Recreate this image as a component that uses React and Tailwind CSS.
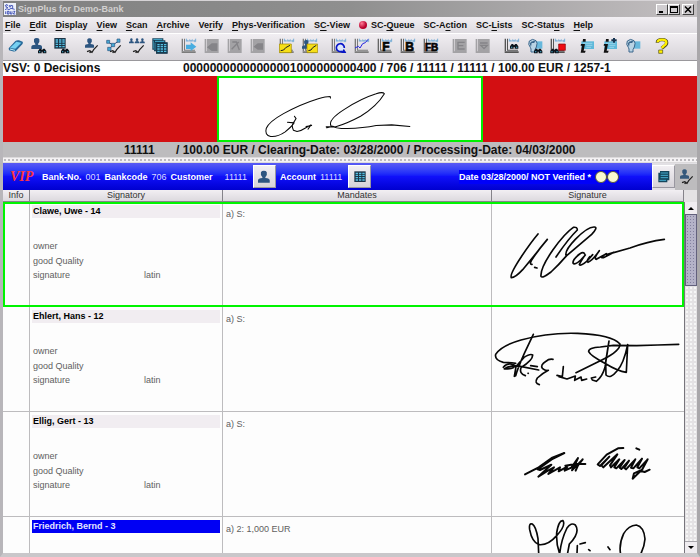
import React from "react";

/* ---------- icon parts, all on a 48 x 48 grid ---------- */

const Binoculars = ({ x = 0, y = 0 }) => (
  <g transform={`translate(${x} ${y})`}>
    <path d="M1 8L6 1H10L13 5L17 1H21L26 8V15H15V10H12V15H1Z" fill="#0c141c" />
    <path d="M4 9H8V12H4ZM19 9H23V12H19Z" fill="#48b4d8" />
  </g>
);
const Person = ({ x = 0, y = 0, s = 1, fill = "#2d5580" }) => (
  <g transform={`translate(${x} ${y}) scale(${s})`} fill={fill}>
    <path d="M8 4Q10 0 16 0Q22 0 24 4V12L20 18V20Q32 20 32 27V33H0V27Q0 20 12 20V18L8 12Z" />
  </g>
);
const Bars = ({ fill = "#7c7c7c" }) => (
  <g>
    <path d="M2 2H6V40H2ZM9 2H12V36H9Z" fill={fill} />
    <path d="M2 40H44V45H2ZM9 35H42V38H9Z" fill={fill} />
    <path d="M16 11V2M16 7H20V11M24 11V6H28V11M32 11V6H36V11M44 2V11H40V7H44" stroke="#6aa6d4" strokeWidth="2.5" fill="none" />
  </g>
);
const GridBlock = ({ x = 0, y = 0, bg = "#1d3648" }) => (
  <g transform={`translate(${x} ${y})`}>
    <path d="M0 0H34V32H0Z" fill={bg} />
    <path d="M4 6H11M14 6H21M24 6H31M4 12H11M14 12H21M24 12H31M4 19H11M14 19H21M24 19H31M4 26H11M14 26H21M24 26H31" stroke="#55bfe2" strokeWidth="4" />
  </g>
);
const Pen = () => <path d="M12 41L20 38L27 43L32 35L44 22M20 45L24 38" fill="none" stroke="#202020" strokeWidth="3.5" />;
const Disabled = ({ children }) => (
  <g>
    <path d="M2 3H7V40H2ZM9 3H44V40H9ZM2 40H44V45H2Z" fill="#a3a2a5" />
    <g fill="none" stroke="#858488" strokeWidth="4">{children}</g>
  </g>
);
const Head = () => (
  <g>
    <path d="M24 10H46V32H24Z" fill="#68b8dc" />
    <path d="M10 28Q2 20 7 9Q16 0 27 8Q33 14 28 27L24 35V42H12V33Z" fill="#b9d3e4" stroke="#3c678c" strokeWidth="3" />
    <path d="M8 17Q12 6 26 10L21 15L14 15L12 26Z" fill="#3c678c" />
  </g>
);
const Info = ({ extra }) => (
  <g>
    <path d="M7 10H45V33H7Z" fill="#5fb9da" />
    <path d="M12 16H40M22 22H40M22 28H36" stroke="#b4e2f0" strokeWidth="2" />
    <path d="M12 3H20V11H11ZM6 18H18L14 38H20L18 44H5L9 23H5Z" fill="#111" />
    {extra && <path d="M28 4H33V0H39V4H44V10H39V14H33V10H28Z" fill="#173450" />}
  </g>
);
const ChartLetters = ({ text, size }) => (
  <g>
    <Bars fill="#666" />
    <text x={text.length > 1 ? 6 : 16} y="40" fontFamily="Liberation Sans, Arial, sans-serif" fontWeight="900" fontSize={size} fill="#050505" stroke="#050505" strokeWidth="2">
      {text}
    </text>
  </g>
);

const toolGroups = [
  [
    ["Clear", <g key="i"><path d="M2 31L22 9Q26 6 33 7L44 11Q46 15 43 19L26 37Q22 42 14 40L3 37Z" fill="#286a9a" /><path d="M6 30L25 11L40 14L22 32Z" fill="#75d0f2" /><path d="M6 33L21 37" stroke="#b9effd" strokeWidth="3" /></g>],
    ["Find customer", <g key="i"><Person x={1} y={0} /><Binoculars x={20} y={31} /></g>],
    ["Find account", <g key="i"><GridBlock x={1} y={0} /><Binoculars x={20} y={31} /></g>],
  ],
  [
    ["Signatory", <g key="i"><Person x={6} y={1} s={0.85} /><Pen /></g>],
    ["Relations", <g key="i"><path d="M6 12L21 21L39 8M21 21L10 33" stroke="#2d5580" strokeWidth="3" fill="none" /><path d="M2 7H11V16H2ZM16 16H26V26H16ZM33 3H42V13H33ZM5 28H15V38H5Z" fill="#45a9d5" stroke="#2d5580" strokeWidth="2" /><Pen /></g>],
    ["Group", <g key="i"><Person x={0} y={1} s={0.45} /><Person x={17} y={1} s={0.45} /><Person x={33} y={1} s={0.45} /><Pen /></g>],
    ["Account sheets", <g key="i"><path d="M1 1H34V7H40V13H47V47H12V40H6V35H1Z" fill="#183b50" /><path d="M4 4H31M9 10H37" stroke="#48b4d8" strokeWidth="3" /><path d="M4 8V32M9 14V37" stroke="#48b4d8" strokeWidth="2" /><GridBlock x={12} y={14} bg="#183b50" /></g>],
  ],
  [
    ["Next item", <g key="i"><Bars /><path d="M15 20H29V13L46 26L29 39V33H15Z" fill="#48ade0" /></g>],
    ["Reject item", <Disabled key="i"><path d="M38 18H24L12 28L24 37H38Z" fill="#858488" /></Disabled>],
    ["Reset item", <Disabled key="i"><path d="M14 34L35 12M16 12H28L37 36" /></Disabled>],
    ["Return item", <Disabled key="i"><path d="M37 18H24L14 26L24 33H37Z" fill="#858488" /></Disabled>],
  ],
  [
    ["Verify check", <g key="i"><Bars /><path d="M1 18H37V44H1Z" fill="#f6df18" stroke="#9c8400" strokeWidth="2" /><path d="M5 38L14 36L20 29L33 22" stroke="#222" strokeWidth="3" fill="none" /></g>],
    ["Verify customer", <g key="i"><Bars /><Person x={0} y={6} s={0.8} /><path d="M15 18H47V44H15Z" fill="#f6df18" stroke="#9c8400" strokeWidth="2" /><path d="M19 38L27 36L32 29L43 22" stroke="#222" strokeWidth="3" fill="none" /></g>],
  ],
  [
    ["Refresh", <g key="i"><Bars /><circle cx="28" cy="29" r="12" fill="#dce8fa" /><path d="M40 30A12 12 0 1 0 33 40" fill="none" stroke="#0715c8" strokeWidth="5" /><path d="M46 45H30L38 33Z" fill="#0715c8" /></g>],
    ["Trace", <g key="i"><Bars /><path d="M3 30L13 25L18 30L26 17L34 14L42 4" fill="none" stroke="#2424e0" strokeWidth="3" /></g>],
    ["Front", <ChartLetters key="i" text="F" size={36} />],
    ["Back", <ChartLetters key="i" text="B" size={36} />],
    ["Front and back", <ChartLetters key="i" text="FB" size={30} />],
  ],
  [
    ["Lock", <Disabled key="i"><path d="M38 13H18V33H38M19 23H34" /></Disabled>],
    ["Unlock", <Disabled key="i"><path d="M15 15H38M17 22L27 32L37 22Z" /></Disabled>],
  ],
  [
    ["Find item", <g key="i"><Bars fill="#555" /><Binoculars x={17} y={17} /></g>],
    ["Find person", <g key="i"><Head /><Binoculars x={20} y={31} /></g>],
    ["Stop search", <g key="i"><Bars fill="#555" /><Binoculars x={0} y={31} /><path d="M26 18H46V37H26Z" fill="#ee0c12" stroke="#850008" strokeWidth="2" /></g>],
  ],
  [
    ["Item info", <Info key="i" />],
    ["Add info", <Info key="i" extra />],
    ["Person info", <Head key="i" />],
  ],
  [
    ["Help", <g key="i"><path d="M10 14Q10 5 24 5Q38 5 38 14Q38 20 29 26L23 31" fill="none" stroke="#4d4a20" strokeWidth="10" /><path d="M14 36H26V46H14Z" fill="#fff000" stroke="#4d4a20" strokeWidth="2" /><path d="M11 13Q11 5 24 5Q37 5 37 14Q37 19 28 25L23 30" fill="none" stroke="#fff000" strokeWidth="7" /></g>],
  ],
];

const menus = [
  ["", "F", "ile"], ["", "E", "dit"], ["", "D", "isplay"], ["", "V", "iew"], ["", "S", "can"],
  ["", "A", "rchive"], ["Ve", "r", "ify"], ["", "P", "hys-Verification"], ["S", "C", "-View"],
  ["SC-", "Q", "ueue"], ["SC-A", "c", "tion"], ["SC-", "L", "ists"], ["SC-Stat", "u", "s"], ["", "H", "elp"],
];

/* ---------- handwriting ---------- */

const Ink = ({ viewBox, className, width = 5, label, children }) => (
  <svg viewBox={viewBox} className={className} role="img" aria-label={label} fill="none" stroke="#080808" strokeWidth={width} strokeLinecap="round" strokeLinejoin="round">
    {children}
  </svg>
);

const CheckSignature = () => (
  <Ink viewBox="51 6 792 186" className="h-[62px] w-[262px]" width={3.2} label="Signature on check">
    <path d="M388 66L387 61Q374 61 351 68Q299 84 246 113Q203 137 194 157Q188 178 207 182Q228 184 251 168Q270 153 278 141L258 139M279 121L284 128L276 141Q269 148 276 163L287 167Q299 165 311 157L329 147L320 160M314 152L331 149" />
    <path d="M375 153L404 153Q440 142 479 121Q528 91 551 53Q546 46 526 53Q481 67 430 100Q381 131 389 149Q400 158 439 158Q487 157 526 149L573 147L628 152M377 156L395 151L405 155" />
  </Ink>
);

const SignatureClawe = () => (
  <Ink viewBox="426 144 576 312" className="h-[104px] w-[192px]" label="Signature of Uwe Clawe">
    <path d="M564 240Q542 266 514 308Q478 362 484 371Q496 371 518 347Q549 310 592 256Q562 291 544 320Q538 332 546 331M554 340L561 342" />
    <path d="M618 309Q655 254 682 228Q682 218 670 220Q645 237 609 287Q570 344 573 367Q577 374 603 354Q625 334 650 305L725 241Q745 220 733 219Q713 218 676 256Q644 289 648 304" />
    <path d="M704 300Q701 292 689 300Q668 316 669 327Q674 335 692 318L706 303Q699 311 688 331Q691 338 710 322L728 302M719 308Q708 321 714 325Q728 319 748 290Q730 314 739 316L769 299Q747 313 760 311L792 295L770 302L840 282Q893 262 943 256" />
  </Ink>
);

const SignatureEhlert = () => (
  <Ink viewBox="36 21 576 312" className="h-[104px] w-[192px]" label="Signature of Hans Ehlert">
    <path d="M160 103L133 160Q113 205 107 227L103 229L108 200L132 172Q151 160 158 165Q159 180 123 203Q117 221 136 227M70 202Q82 187 101 194Q112 206 73 207Q91 194 121 199L176 210M152 197L172 200M144 220H145" />
    <path d="M107 190Q90 187 70 187Q43 180 47 163Q63 137 123 120Q204 97 293 100Q396 104 420 132Q421 152 370 178L288 218" />
    <path d="M219 178Q206 176 198 184Q180 195 187 205Q196 213 205 211Q189 219 172 234Q162 250 178 254M250 200L247 230L231 226M237 230L261 237L286 228L284 241L303 231L305 241L320 237M347 231L334 234L337 240L349 244Q367 231 375 202L387 123L377 185L378 225Q391 238 411 213Q431 192 443 134L439 217Q413 213 377 191Q332 168 326 155Q325 143 361 141L400 136L470 137L533 135L596 133" />
  </Ink>
);

const SignatureEllig = () => (
  <Ink viewBox="36 -54 576 312" className="h-[104px] w-[192px]" width={6} label="Signature of Gert Ellig">
    <path d="M135 133L176 112L215 84L253 69L215 88L173 118L180 120L214 104L186 130L175 140L200 124L222 112L205 132L240 112L236 124L262 110L254 122L274 113L294 84L282 110L276 121L308 88L294 106L287 122M256 107L286 102L316 102" />
    <path d="M430 54L414 55L380 74L353 103L360 108L388 80L364 106L370 112L412 73L390 106L393 112L418 88L403 112L409 115L434 90L419 113L424 117L447 92L433 114L438 118L466 88L453 113L460 115L486 86L472 112L478 115L503 88L487 118L458 146L462 130L480 122L494 126L509 119M469 55L478 59" />
  </Ink>
);

const SignatureFriedrich = () => (
  <Ink viewBox="36 261 576 312" className="h-[104px] w-[192px]" label="Signature of Bernd Friedrich">
    <path d="M176 368L174 326Q168 289 157 282Q146 278 149 299Q156 337 177 344Q204 347 230 317Q258 287 249 272Q236 270 230 309Q228 342 239 371Q244 328 261 294Q273 276 286 285Q302 307 268 342L262 374M292 347L291 371M300 342L316 338M326 359L330 362M384 351L390 359M422 373Q416 343 431 311Q446 286 469 285Q492 290 495 327Q493 352 481 374" />
  </Ink>
);

const signatories = [
  { name: "Clawe, Uwe - 14", mandate: "a) S:", Sign: SignatureClawe, current: true },
  { name: "Ehlert, Hans - 12", mandate: "a) S:", Sign: SignatureEhlert },
  { name: "Ellig, Gert - 13", mandate: "a) S:", Sign: SignatureEllig },
  { name: "Friedrich, Bernd - 3", mandate: "a) 2: 1,000 EUR", Sign: SignatureFriedrich, selected: true },
];

/* ---------- window parts ---------- */

const WindowButton = ({ label, children }) => (
  <button aria-label={label} className="flex h-[11px] w-3 items-center justify-center border border-t-white border-r-[#404040] border-b-[#404040] border-l-white bg-[#d0cdd0]">
    <svg viewBox="0 0 10 9" className="h-[9px] w-[10px]" fill="none" stroke="#000" shapeRendering="crispEdges">{children}</svg>
  </button>
);

const TitleBar = () => (
  <header className="flex h-4 shrink-0 items-center bg-linear-to-r from-[#808080] via-[#8f8f8f] to-[#c4c0c2] pr-[3px] pl-px">
    <svg viewBox="0 0 36 36" className="h-3 w-3" aria-hidden="true">
      <path d="M0 0H36V36H0Z" fill="#eef1fa" />
      <path d="M3 9Q6 2 11 6L5 12L12 14M16 6V13M20 13V7L26 8V17M3 20Q9 14 15 20L21 16L32 19M5 25V33M10 25H15V33H10ZM19 25V33H24V25M28 25H33L28 33H34" fill="none" stroke="#2b3fae" strokeWidth="2.5" />
    </svg>
    <h1 className="ml-0.5 grow text-[9px] leading-3 font-bold text-[#d2d0d0]">SignPlus for Demo-Bank</h1>
    <div className="flex">
      <WindowButton label="Minimize"><path d="M2 7.5H6M2 6.5H6" /></WindowButton>
      <WindowButton label="Maximize"><path d="M1.5 1.5H8.5V7.5H1.5ZM1 2.5H9" /></WindowButton>
      <div className="ml-0.5 flex"><WindowButton label="Close"><path d="M2 1.5L8 7.5M8 1.5L2 7.5" strokeWidth="1.5" shapeRendering="auto" /></WindowButton></div>
    </div>
  </header>
);

const MenuBar = () => (
  <nav className="flex h-4 shrink-0 items-center gap-[9px] bg-linear-to-b from-[#f2eff3] to-[#dedbe0] pl-0.5 text-[9px] leading-3 font-bold text-[#111]">
    {menus.map(([before, key, after]) => (
      <button key={before + key + after} className="flex items-center whitespace-nowrap">
        {before + key + after === "SC-Queue" && <span className="mr-1 h-2 w-2 rounded-full bg-radial-[at_35%_30%] from-[#ff7c98] to-[#b8002c] to-60%" />}
        <span>{before}<span className="underline underline-offset-2">{key}</span>{after}</span>
      </button>
    ))}
  </nav>
);

const ToolBar = () => (
  <div role="toolbar" aria-label="Tools" className="flex h-[27px] shrink-0 items-center gap-[10px] border-t border-t-white bg-linear-to-b from-[#f1eef2] to-[#d6d3d8] pb-0.5 pl-[3px]">
    {toolGroups.map((group, i) => (
      <div key={i} className="flex gap-1">
        {group.map(([label, icon]) => (
          <button key={label} aria-label={label} className="flex w-[19px] justify-center">
            <svg viewBox="0 0 48 48" className="h-4 w-4">{icon}</svg>
          </button>
        ))}
      </div>
    ))}
  </div>
);

const BarButton = ({ label, flat, children }) => (
  <button aria-label={label} className={flat
    ? "flex h-[26px] w-[22px] items-center justify-center bg-[#bdbcbe]"
    : "flex h-[23px] w-[23px] items-center justify-center border border-t-white border-r-[#9997a0] border-b-[#9997a0] border-l-white bg-linear-to-b from-[#f2eff3] to-[#d6d3d8]"}>
    <svg viewBox="0 0 48 48" className="h-4 w-4 shrink-0">{children}</svg>
  </button>
);

const AccountBar = () => (
  <section className="flex h-[27px] shrink-0 items-stretch bg-[#e2e0e4]">
    <div className="flex grow items-center bg-linear-to-b from-[#5a5af4] via-[#1010fa] via-50% to-[#0000d0] pl-[7px] text-[9px] leading-3 text-[#dcdcff]">
      <span className="w-8 font-[Liberation_Serif,serif] text-sm font-bold text-[#ff3440] italic">VIP</span>
      <dl className="flex items-center gap-1">
        <dt className="font-bold text-white">Bank-No.</dt><dd>001</dd>
        <dt className="font-bold text-white">Bankcode</dt><dd>706</dd>
        <dt className="font-bold text-white">Customer</dt><dd className="mr-0.5 ml-2">11111</dd>
        <BarButton label="Customer details"><Person x={6} y={5} s={1.1} /></BarButton>
        <dt className="font-bold text-white">Account</dt><dd className="mr-0.5">11111</dd>
        <BarButton label="Account details"><GridBlock x={7} y={7} /></BarButton>
      </dl>
      <div className="mr-[33px] ml-auto flex items-center bg-[#0000fa] py-px">
        <span className="font-bold text-white">Date 03/28/2000/ NOT Verified *</span>
        <span className="ml-1 h-3 w-3 rounded-full border border-[#55553c] bg-[#fafad0]" />
        <span className="h-3 w-3 rounded-full border border-[#55553c] bg-[#fafad0]" />
      </div>
    </div>
    <div className="flex items-center">
      <BarButton label="List view"><path d="M12 6H40V34H34V40H7V11H12Z" fill="#14465c" /><path d="M14 12H36M14 19H36M14 26H36M10 34H30" stroke="#46acd0" strokeWidth="3" /></BarButton>
      <BarButton label="Signature view" flat><Person x={6} y={1} s={0.85} fill="#34587c" /><Pen /></BarButton>
    </div>
  </section>
);

const SignatoryRow = ({ name, mandate, Sign, current, selected }) => (
  <tr className={current ? "outline-2 -outline-offset-2 outline-[#00f400]" : ""}>
    <td className="h-[105px] border-r border-b border-[#bdbcbe] p-0" />
    <td className="border-r border-b border-[#bdbcbe] p-0 px-0.5 pt-[3px] align-top text-[#606060]">
      <div className={selected
        ? "h-[13px] bg-[#0000f4] pl-px leading-3 font-bold text-[#e4e4ff]"
        : "h-[13px] bg-[#f1edf1] pl-px leading-3 font-bold text-black"}>{name}</div>
      {!selected && (
        <div className="mt-[21px] pl-px leading-[15px]">
          <div>owner</div>
          <div>good Quality</div>
          <div className="grid grid-cols-[111px_1fr] leading-[13px]"><span>signature</span><span>latin</span></div>
        </div>
      )}
    </td>
    <td className="border-r border-b border-[#bdbcbe] p-0 pt-1.5 pl-[3px] align-top leading-3 text-[#606060]">{mandate}</td>
    <td className="border-b border-[#bdbcbe] p-0 align-top"><Sign /></td>
  </tr>
);

const columns = ["Info", "Signatory", "Mandates", "Signature"];

const ScrollBar = () => (
  <div className="flex w-[13px] shrink-0 flex-col bg-[#e4e2e4]">
    <div className="h-3" />
    <div className="flex grow flex-col border-l border-[#77757c]">
      <button aria-label="Scroll up" className="flex h-3 items-center justify-center bg-[#f0edf1]">
        <svg viewBox="0 0 6 3" className="h-[3px] w-[6px]"><path d="M3 0L6 3H0Z" /></svg>
      </button>
      <div className="h-[72px] border border-[#62607c] bg-[#b4b2c8] bg-[radial-gradient(#83819f_28%,transparent_32%)] bg-size-[3px_3px]" />
      <div className="grow bg-[radial-gradient(#f6f6f6_28%,transparent_32%)] bg-size-[4px_4px]" />
      <button aria-label="Scroll down" className="flex h-3 items-center justify-center border-t border-[#a8a6ac] bg-[#f0edf1]">
        <svg viewBox="0 0 6 3" className="h-[3px] w-[6px]"><path d="M0 0H6L3 3Z" /></svg>
      </button>
    </div>
  </div>
);

export default function App() {
  return (
    <div className="flex h-screen flex-col border-t border-r-3 border-b-4 border-l-3 border-t-[#d6d3d6] border-r-[#a9a7aa] border-b-[#c9c7ca] border-l-[#b8b6ba] bg-[#e4e2e4] font-[Liberation_Sans,Arial,sans-serif]">
      <TitleBar />
      <MenuBar />
      <ToolBar />
      <div className="flex h-4 shrink-0 items-center border-t border-[#9a989c] bg-white text-xs leading-[15px] font-bold whitespace-nowrap text-[#111]">
        <span className="w-[180px]">VSV: 0 Decisions</span>
        <span>00000000000000001000000000400 / 706 / 11111 / 11111 / 100.00 EUR / 1257-1</span>
      </div>
      <div className="flex h-[66px] shrink-0 items-center justify-center bg-[#d30f12]">
        <div className="border-2 border-[#00f000] bg-white"><CheckSignature /></div>
      </div>
      <div className="flex h-[15px] shrink-0 items-center bg-[#bdbcbe] pt-0.5 pl-[121px] text-xs leading-[15px] font-bold whitespace-nowrap text-[#111]">
        <span className="w-[52px]">11111</span>
        <span>/ 100.00 EUR / Clearing-Date: 03/28/2000 / Processing-Date: 04/03/2000</span>
      </div>
      <div className="h-1.5 shrink-0 border-y border-[#dcdadc] bg-[#f4f2f4] bg-[radial-gradient(#bcbabe_28%,transparent_32%)] bg-size-[4px_4px]" />
      <AccountBar />
      <main className="flex min-h-0 grow overflow-hidden">
        <div className="min-w-0 grow overflow-hidden bg-[#fdfdfd]">
          <table className="w-full table-fixed border-separate border-spacing-0 text-left text-[9px]">
            <colgroup>
              <col className="w-[27px]" />
              <col className="w-[193px]" />
              <col />
              <col className="w-[192px]" />
            </colgroup>
            <thead>
              <tr>
                {columns.map((c) => (
                  <th key={c} className="h-3 border-r border-b border-[#85838a] bg-linear-to-b from-[#f2eff3] to-[#dcd9de] p-0 text-center leading-[11px] font-normal text-[#333]">{c}</th>
                ))}
              </tr>
            </thead>
            <tbody>
              {signatories.map((s) => <SignatoryRow key={s.name} {...s} />)}
            </tbody>
          </table>
        </div>
        <ScrollBar />
      </main>
    </div>
  );
}
